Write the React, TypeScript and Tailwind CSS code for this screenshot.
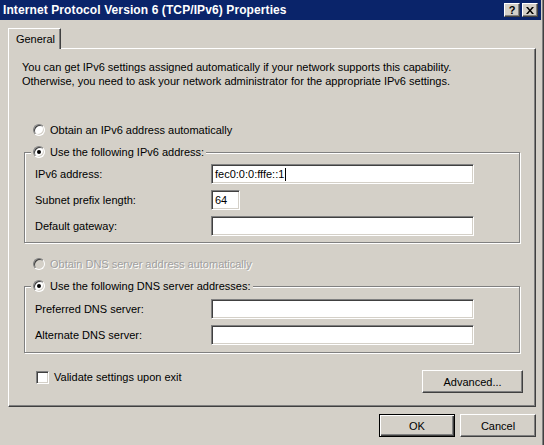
import type { ReactNode } from "react";

const raised =
  "border border-t-white border-l-white border-r-[#404040] border-b-[#404040] shadow-[inset_-1px_-1px_0_#808080] bg-[#d4d0c8]";
const sunken =
  "border border-t-[#808080] border-l-[#808080] border-r-white border-b-white shadow-[inset_1px_1px_0_#404040,inset_-1px_-1px_0_#d4d0c8]";

function Radio({ checked = false, disabled = false }: { checked?: boolean; disabled?: boolean }) {
  return (
    <span
      className={`relative w-[12px] h-[12px] shrink-0 rounded-full flex items-center justify-center ${sunken} ${
        disabled ? "bg-[#d4d0c8]" : "bg-white"
      }`}
    >
      {checked && <span className="w-[4px] h-[4px] rounded-full bg-black" />}
    </span>
  );
}

function RadioRow({
  label,
  checked,
  disabled,
}: {
  label: string;
  checked?: boolean;
  disabled?: boolean;
}) {
  return (
    <div className="flex items-center gap-[5px] h-[14px]">
      <Radio checked={checked} disabled={disabled} />
      <span
        className={`leading-[14px] whitespace-nowrap ${
          disabled ? "text-[#a0a0a0] [text-shadow:1px_1px_0_#fff]" : "text-black"
        }`}
      >
        {label}
      </span>
    </div>
  );
}

function TextBox({ width, children }: { width: string; children?: ReactNode }) {
  return (
    <div className={`h-[20px] ${width} ${sunken} bg-white flex items-center pl-[3px] whitespace-nowrap`}>
      {children}
    </div>
  );
}

function Field({ label, width = "w-[263px]", children }: { label: string; width?: string; children?: ReactNode }) {
  return (
    <div className="flex items-center h-[20px]">
      <span className="w-[176px] whitespace-nowrap">{label}</span>
      <TextBox width={width}>{children}</TextBox>
    </div>
  );
}

function GroupBox({ label, children, className }: { label: string; children: ReactNode; className: string }) {
  return (
    <div
      className={`relative ml-[15px] w-[496px] border border-[#808080] shadow-[1px_1px_0_#fff,inset_1px_1px_0_#fff] pl-[10px] flex flex-col gap-[6px] ${className}`}
    >
      <div className="absolute left-[6px] -top-[8px] bg-[#d4d0c8] pl-[2px] pr-[2px]">
        <RadioRow label={label} checked />
      </div>
      {children}
    </div>
  );
}

function Button({ label, width, isDefault = false }: { label: string; width: string; isDefault?: boolean }) {
  const frame = isDefault
    ? "border border-black shadow-[inset_1px_1px_0_#fff,inset_-1px_-1px_0_#404040,inset_-2px_-2px_0_#808080] bg-[#d4d0c8]"
    : raised;
  return (
    <div className={`h-[23px] ${width} ${frame} flex items-center justify-center`}>
      <span className="leading-[14px]">{label}</span>
    </div>
  );
}

export default function App() {
  return (
    <div className="w-[544px] h-[445px] bg-[#d4d0c8] font-['Liberation_Sans',Arial,sans-serif] text-[11px] text-black overflow-hidden flex">
      <div className="w-[541px] flex flex-col">
        <div className="h-[20px] bg-[#0a246a] flex items-center pl-[3px] pr-[3px] gap-[2px]">
          <span className="flex-1 text-white font-bold text-[12px] tracking-[0.1px] whitespace-nowrap">
            Internet Protocol Version 6 (TCP/IPv6) Properties
          </span>
          <div className={`w-[16px] h-[14px] ${raised} flex items-center justify-center`}>
            <span className="font-bold text-[11px] leading-none">?</span>
          </div>
          <div className={`w-[16px] h-[14px] ${raised} flex items-center justify-center`}>
            <svg width="8" height="7" viewBox="0 0 8 7">
              <path d="M0 0h2l2 2.5L6 0h2L5 3.5 8 7H6L4 4.5 2 7H0l3-3.5z" fill="#000" />
            </svg>
          </div>
        </div>

        <div className="pl-[8px] pt-[8px] flex flex-col">
          <div className="relative z-10 -mb-px w-[53px] h-[21px] bg-[#d4d0c8] border-t border-l border-white border-r border-r-[#404040] shadow-[inset_-1px_0_0_#808080] flex items-center justify-center">
            <span className="leading-[14px] pl-[2px]">General</span>
          </div>

          <div className="w-[528px] h-[359px] border border-t-white border-l-white border-r-[#404040] border-b-[#404040] shadow-[inset_-1px_-1px_0_#808080] flex flex-col">
            <div className="mt-[11px] ml-[13px] leading-[14px] whitespace-nowrap">
              <div>You can get IPv6 settings assigned automatically if your network supports this capability.</div>
              <div>Otherwise, you need to ask your network administrator for the appropriate IPv6 settings.</div>
            </div>

            <div className="mt-[35px] ml-[24px]">
              <RadioRow label="Obtain an IPv6 address automatically" />
            </div>

            <GroupBox label="Use the following IPv6 address:" className="mt-[15px] pt-[11px] pb-[6px]">
              <Field label="IPv6 address:">
                <span>fec0:0:0:fffe::1</span>
                <span className="ml-px w-px h-[13px] bg-black" />
              </Field>
              <Field label="Subnet prefix length:" width="w-[29px]">
                <span>64</span>
              </Field>
              <Field label="Default gateway:" />
            </GroupBox>

            <div className="mt-[14px] ml-[24px]">
              <RadioRow label="Obtain DNS server address automatically" disabled />
            </div>

            <GroupBox label="Use the following DNS server addresses:" className="mt-[15px] pt-[12px] pb-[7px]">
              <Field label="Preferred DNS server:" />
              <Field label="Alternate DNS server:" />
            </GroupBox>

            <div className="mt-[17px] ml-[27px] mr-[12px] flex items-start justify-between">
              <div className="flex items-center gap-[5px] h-[14px]">
                <span className={`w-[13px] h-[13px] bg-white ${sunken}`} />
                <span className="leading-[14px] whitespace-nowrap">Validate settings upon exit</span>
              </div>
              <Button label="Advanced..." width="w-[101px]" />
            </div>
          </div>

          <div className="w-[528px] mt-[7px] flex justify-end gap-[5px]">
            <Button label="OK" width="w-[76px]" isDefault />
            <Button label="Cancel" width="w-[76px]" />
          </div>
        </div>
      </div>
      <div className="w-[3px] border-r border-r-[#404040] shadow-[inset_-1px_0_0_#808080]" />
    </div>
  );
}
